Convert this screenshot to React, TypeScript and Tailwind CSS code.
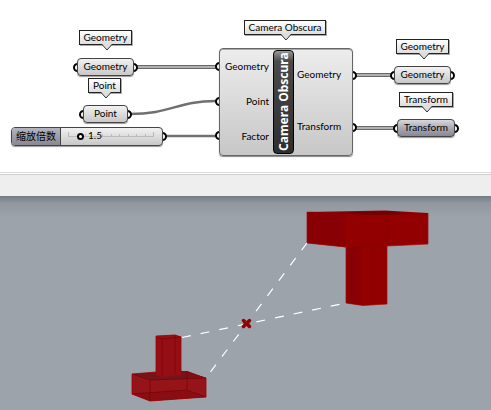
import type { ReactNode } from "react";

function Callout({ place, children }: { place: string; children: ReactNode }) {
  return (
    <div className={`absolute flex h-[15px] items-center justify-center border border-[#222] bg-linear-to-b from-white to-[#dedede] pb-[2px] shadow-[1px_1px_0_#aaa] ${place}`}>
      {children}
      <svg className="absolute top-[13px] left-1/2 -ml-1" width="10" height="7" viewBox="0 0 10 7" aria-hidden="true">
        <path d="M0 0 5 6 10 0Z" fill="#dedede" />
        <path d="M0 .5 5 6 10 .5" fill="none" stroke="#333" />
      </svg>
    </div>
  );
}

function Grip({ place }: { place: string }) {
  return <i className={`absolute -z-10 size-[9px] rounded-full border-2 border-black bg-white ${place}`} />;
}

function Param({ place, tone, children }: { place: string; tone: string; children: ReactNode }) {
  return (
    <div className={`absolute isolate h-[18px] ${place}`}>
      <Grip place="-left-1 top-[5px]" />
      <Grip place="-right-1 top-[5px]" />
      <div className={`flex h-full items-center justify-center rounded-[4px] border border-[#444] bg-linear-to-b pb-[2px] shadow-[0_1px_1px_#999] ${tone}`}>
        {children}
      </div>
    </div>
  );
}

const light = "from-[#f2f2f2] to-[#c8c8c8]";

function Definition() {
  return (
    <section className="relative h-[172px] overflow-hidden bg-white">
      <svg className="absolute top-0 left-0" width="491" height="172" viewBox="0 0 491 172" fill="none" aria-hidden="true">
        <g stroke="#6a6a6a" strokeWidth="4">
          <path d="M135 67H216M355 75H393M355 128H396" />
        </g>
        <g stroke="#b0b0b0" strokeWidth="2">
          <path d="M135 67H216M355 75H393M355 128H396" />
        </g>
        <path d="M130 114C171 114 177 101 216 101M165 136H216" stroke="#707070" strokeWidth="2.500" />
      </svg>

      <Callout place="left-[79px] top-[30px] w-[53px]">Geometry</Callout>
      <Param place="left-[77px] top-[58px] w-[57px]" tone={light}>Geometry</Param>
      <Callout place="left-[88px] top-[78px] w-[33px]">Point</Callout>
      <Param place="left-[83px] top-[105px] w-[45px]" tone={light}>Point</Param>

      <div className="absolute top-[127px] left-[11px] isolate h-[19px] w-[152px]">
        <Grip place="-right-1 top-[5px]" />
        <div className="flex h-full items-stretch overflow-hidden rounded-[4px] border border-[#444] bg-linear-to-b from-[#f2f2f2] to-[#c8c8c8] shadow-[0_1px_1px_#999]">
          <label htmlFor="factor" className="flex w-[49px] items-center justify-center border-r border-[#444] bg-linear-to-b from-[#b4b4be] to-[#888894] pb-px">缩放倍数</label>
          <div className="relative flex-1">
            <svg className="absolute top-[4px] left-[7px]" width="88" height="6" viewBox="0 0 88 6" fill="none" stroke="#bbb" aria-hidden="true">
              <path d="M0 4.5H86M.5 0V5M17.5 2V5M34.5 2V5M43.5 2V5M51.5 2V5M60.5 2V5M68.5 2V5M77.5 2V5M85.5 0V5" />
            </svg>
            <input id="factor" type="range" min="1" max="3.5" step="0.1" defaultValue="1.3" className="absolute top-[5px] left-[7px] m-0 h-[7px] w-[86px] appearance-none bg-transparent [&::-webkit-slider-thumb]:size-[7px] [&::-webkit-slider-thumb]:appearance-none [&::-webkit-slider-thumb]:rounded-full [&::-webkit-slider-thumb]:border-2 [&::-webkit-slider-thumb]:border-black [&::-webkit-slider-thumb]:bg-white" />
            <output htmlFor="factor" className="absolute top-px left-[27px] leading-3">1.5</output>
          </div>
        </div>
      </div>

      <Callout place="left-[244px] top-[20px] w-[82px]">Camera Obscura</Callout>
      <div className="absolute top-[48px] left-[219px] isolate h-[108px] w-[134px]">
        <Grip place="-left-1 top-[14px]" />
        <Grip place="-left-1 top-[49px]" />
        <Grip place="-left-1 top-[83px]" />
        <Grip place="-right-1 top-[23px]" />
        <Grip place="-right-1 top-[75px]" />
        <div className="flex h-full rounded-[4px] border border-[#666] bg-linear-to-b from-[#ededed] to-[#c7c7c7] py-px shadow-[0_1px_1px_#888,inset_0_1px_0_#a8a8a8]">
          <ul className="-mt-[2px] flex w-[53px] flex-col justify-around pr-[4px] text-right">
            <li>Geometry</li>
            <li>Point</li>
            <li>Factor</li>
          </ul>
          <h1 className="flex w-[21px] rotate-180 items-center justify-center rounded-[4px] border border-black bg-linear-to-b from-[#2e2e2e] via-[#4a4a4a] via-90% to-[#999] font-['Noto_Sans',sans-serif] text-[12px] font-bold text-white [writing-mode:vertical-rl]">Camera Obscura</h1>
          <ul className="-mt-[2px] flex flex-1 flex-col justify-around pb-[2px] pl-[3px]">
            <li>Geometry</li>
            <li>Transform</li>
          </ul>
        </div>
      </div>

      <Callout place="left-[396px] top-[39px] w-[53px]">Geometry</Callout>
      <Param place="left-[394px] top-[66px] w-[57px]" tone={light}>Geometry</Param>
      <Callout place="left-[399px] top-[92px] w-[54px]">Transform</Callout>
      <Param place="left-[397px] top-[119px] w-[58px]" tone="from-[#d8d8dd] via-[#aaaab5] via-50% to-[#888894]">Transform</Param>
    </section>
  );
}

function Viewport() {
  return (
    <section className="h-[214px] overflow-hidden bg-[#9ca3aa] bg-linear-to-b from-[#747b82] via-[#9097a0] via-[7px] to-[#9ca3aa] to-[22px]">
      <svg width="491" height="214" viewBox="0 196 491 214" role="img" aria-label="Red solid and its scaled inverted copy">
        <g fill="none" stroke="white" strokeWidth="1.2" strokeDasharray="9 10">
          <path d="M182 337.500 346 303" />
          <path d="M307 243 206 378" />
        </g>
        <path d="M307 212 385 210.500 428 213V244L387 246V304L363 305.500 346 303V247L307 243Z" fill="#930002" />
        <path d="M307 212 344 214V247L307 243ZM346 247H360V305L346 303Z" fill="#880003" />
        <path d="M331 213 388 211 415 214 375 215Z" fill="#700006" />
        <path d="M344 214V247L387 246V214M360 247V305M373 247V305M307 212 344 214 387 214 428 214" fill="none" stroke="#7d0003" strokeWidth=".5" />
        <path d="M307 212V243L346 247V303L363 305.500 387 304V246L428 244V213" fill="none" stroke="#a00b0d" strokeWidth=".7" />
        <path d="M132 374 156 372V336L175 335 181 337V371L187 371 206 378V397L150 401 132 394Z" fill="#95141a" />
        <path d="M132 374 187 371 206 378 150 380Z" fill="#74151b" />
        <path d="M156 337 175 335 181 337V375L162 377 156 375Z" fill="#940f14" />
        <path d="M132 394 186 390 206 397 150 401Z" fill="#890e14" />
        <path d="M132 374 150 380V401M150 380 206 378M187 371V390L206 397M132 394 186 390M162 338V376M175 335V374M156 337 162 339 181 337" fill="none" stroke="#800008" strokeWidth=".8" />
        <path d="M132 374 156 372V336L175 335 181 337V371L206 378V397L150 401 132 394Z" fill="none" stroke="#9c0005" strokeWidth=".8" />
        <path d="M243.500 320.500 249.500 326.500M249.500 320.500 243.500 326.500" stroke="#8f0003" strokeWidth="3.500" strokeLinecap="round" />
        <path d="M246 321V323M246 325V327M243 323.500H244M249 323.500H250" stroke="#d02025" strokeWidth=".6" />
      </svg>
    </section>
  );
}

export default function App() {
  return (
    <main className="font-[Lato,'Noto_Sans_CJK_SC',sans-serif] text-[10px] leading-4 text-black">
      <Definition />
      <div className="h-[24px] border-t border-[#d8d8d8] bg-white pt-px">
        <div className="h-full border-t border-[#ccc] bg-[#eee]" />
      </div>
      <Viewport />
    </main>
  );
}
